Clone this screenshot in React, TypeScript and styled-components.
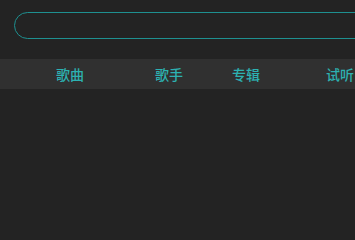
import React from "react";
import styled, { createGlobalStyle } from "styled-components";

const Global = createGlobalStyle`
  html, body {
    margin: 0;
    padding: 0;
    background: #232323;
    overflow: hidden;
  }
  body {
    font-family: "Noto Sans CJK SC", "Noto Sans", sans-serif;
  }
`;

const Page = styled.div`
  width: 355px;
  height: 208px;
  background: #232323;
  overflow: hidden;
  display: flex;
  flex-direction: column;
`;

const SearchArea = styled.div`
  padding: 12px 0 20px 14px;
  display: flex;
`;

const SearchBox = styled.input`
  flex: none;
  width: 370px;
  height: 27px;
  box-sizing: border-box;
  border: 1.5px solid #1e9090;
  border-radius: 14px;
  background: #232323;
  outline: none;
  color: #2aa9a9;
  padding: 0 12px;
  font-family: inherit;
  font-size: 13px;
`;

const TabBar = styled.nav`
  height: 30px;
  background: #303030;
  display: flex;
  align-items: center;
  padding-left: 56px;
  white-space: nowrap;
  overflow: hidden;
`;

const Tab = styled.span<{ $offset: number }>`
  flex: none;
  margin-left: ${(p) => p.$offset}px;
  font-size: 14px;
  font-weight: 500;
  line-height: 30px;
  color: #2db1b1;
  cursor: pointer;
`;

const tabs = [
  { label: "歌曲", offset: 0 },
  { label: "歌手", offset: 71 },
  { label: "专辑", offset: 49 },
  { label: "试听", offset: 66 },
];

export default function App() {
  return (
    <>
      <Global />
      <Page>
        <SearchArea>
          <SearchBox type="text" />
        </SearchArea>
        <TabBar>
          {tabs.map((t) => (
            <Tab key={t.label} $offset={t.offset}>
              {t.label}
            </Tab>
          ))}
        </TabBar>
      </Page>
    </>
  );
}
